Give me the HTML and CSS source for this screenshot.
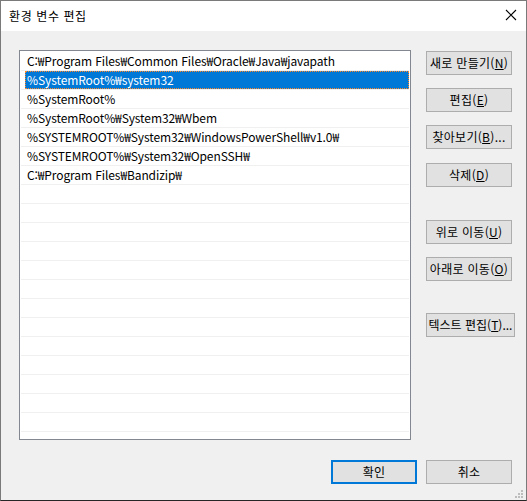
FILE: index.html
```html
<!DOCTYPE html>
<html lang="ko">
<head>
<meta charset="utf-8">
<title>환경 변수 편집</title>
<link rel="stylesheet" href="styles.css">
</head>
<body>
<div class="window">
  <div class="titlebar">
    <span class="title">환경 변수 편집</span>
    <svg class="close" width="12" height="12" viewBox="0 0 12 12"><path d="M1 1 L11 11 M11 1 L1 11" stroke="#000" stroke-width="1.1" fill="none"/></svg>
  </div>
  <div class="client">
    <div class="main">
      <div class="list">
        <div class="row"><span class="label">C:₩Program Files₩Common Files₩Oracle₩Java₩javapath</span></div>
        <div class="row selected"><span class="label">%SystemRoot%₩system32</span></div>
        <div class="row"><span class="label">%SystemRoot%</span></div>
        <div class="row"><span class="label">%SystemRoot%₩System32₩Wbem</span></div>
        <div class="row"><span class="label">%SYSTEMROOT%₩System32₩WindowsPowerShell₩v1.0₩</span></div>
        <div class="row"><span class="label">%SYSTEMROOT%₩System32₩OpenSSH₩</span></div>
        <div class="row"><span class="label">C:₩Program Files₩Bandizip₩</span></div>
        <div class="row"></div><div class="row"></div><div class="row"></div>
        <div class="row"></div><div class="row"></div><div class="row"></div>
        <div class="row"></div><div class="row"></div><div class="row"></div>
        <div class="row"></div><div class="row"></div><div class="row"></div>
        <div class="row"></div><div class="row"></div>
      </div>
      <div class="buttons">
        <button class="btn b-new">새로 만들기(<u>N</u>)</button>
        <button class="btn b-edit">편집(<u>E</u>)</button>
        <button class="btn b-browse">찾아보기(<u>B</u>)...</button>
        <button class="btn b-del">삭제(<u>D</u>)</button>
        <button class="btn b-up">위로 이동(<u>U</u>)</button>
        <button class="btn b-down">아래로 이동(<u>O</u>)</button>
        <button class="btn b-text">텍스트 편집(<u>T</u>)...</button>
      </div>
    </div>
    <div class="footer">
      <button class="btn default">확인</button>
      <button class="btn">취소</button>
    </div>
    <svg class="grip" width="10" height="10" viewBox="0 0 10 10">
      <rect x="7" y="1" width="2" height="2" fill="#bdbdbd"/>
      <rect x="4" y="4" width="2" height="2" fill="#bdbdbd"/>
      <rect x="7" y="4" width="2" height="2" fill="#bdbdbd"/>
      <rect x="1" y="7" width="2" height="2" fill="#bdbdbd"/>
      <rect x="4" y="7" width="2" height="2" fill="#bdbdbd"/>
      <rect x="7" y="7" width="2" height="2" fill="#bdbdbd"/>
    </svg>
  </div>
</div>
</body>
</html>
```
FILE: styles.css
```css
html, body {
  margin: 0;
  padding: 0;
  background: #f0f0f0;
}
body {
  font-family: "Noto Sans CJK KR", "Noto Sans", sans-serif;
  font-size: 12px;
  color: #000;
}
.window {
  width: 527px;
  height: 501px;
  box-sizing: border-box;
  border: 1px solid #7a7a7a;
  border-bottom-color: #262626;
  display: flex;
  flex-direction: column;
  background: #f0f0f0;
}
.titlebar {
  height: 30px;
  flex: none;
  background: #fff;
  display: flex;
  align-items: center;
  justify-content: space-between;
  padding: 0 9px 0 8px;
}
.title {
  font-size: 12px;
  line-height: 16px;
  letter-spacing: 0.6px;
}
.close {
  display: block;
  margin-top: -2px;
}
.client {
  flex: 1;
  position: relative;
  display: flex;
  flex-direction: column;
  padding: 19px 14px 0 18px;
}
.main {
  display: flex;
  gap: 15px;
}
.list {
  flex: none;
  width: 392px;
  height: 390px;
  box-sizing: border-box;
  border: 1px solid #828790;
  background: #fff;
  padding: 1px;
  overflow: hidden;
}
.row {
  height: 18px;
  border-bottom: 1px solid #f0f0f0;
  padding-left: 4px;
  display: flex;
}
.label {
  flex: 1;
  padding-left: 2px;
  line-height: 18px;
  white-space: nowrap;
  letter-spacing: -0.1px;
  box-sizing: border-box;
}
.selected .label {
  background: #0078d7;
  color: #fff;
  outline: 1px dotted #ff8728;
  outline-offset: -1px;
}
.buttons {
  flex: none;
  width: 86px;
  display: flex;
  flex-direction: column;
  align-items: flex-start;
  padding-top: 1px;
}
.btn {
  flex: none;
  width: 86px;
  height: 24px;
  box-sizing: border-box;
  border: 1px solid #adadad;
  background: #e1e1e1;
  font-family: "Noto Sans CJK KR", "Noto Sans", sans-serif;
  font-size: 12px;
  letter-spacing: 0.3px;
  color: #000;
  padding: 0;
  line-height: 20px;
  white-space: nowrap;
}
.btn u {
  text-underline-offset: 1px;
}
.b-edit, .b-browse, .b-down { margin-top: 13px; }
.b-del { margin-top: 14px; }
.b-up { margin-top: 33px; }
.b-text { margin-top: 32px; width: 89px; letter-spacing: 0; }
.footer {
  display: flex;
  justify-content: flex-end;
  gap: 9px;
  margin-top: 20px;
}
.btn.default {
  border: 2px solid #0078d7;
}
.grip {
  position: absolute;
  right: 2px;
  bottom: 1px;
}
```
